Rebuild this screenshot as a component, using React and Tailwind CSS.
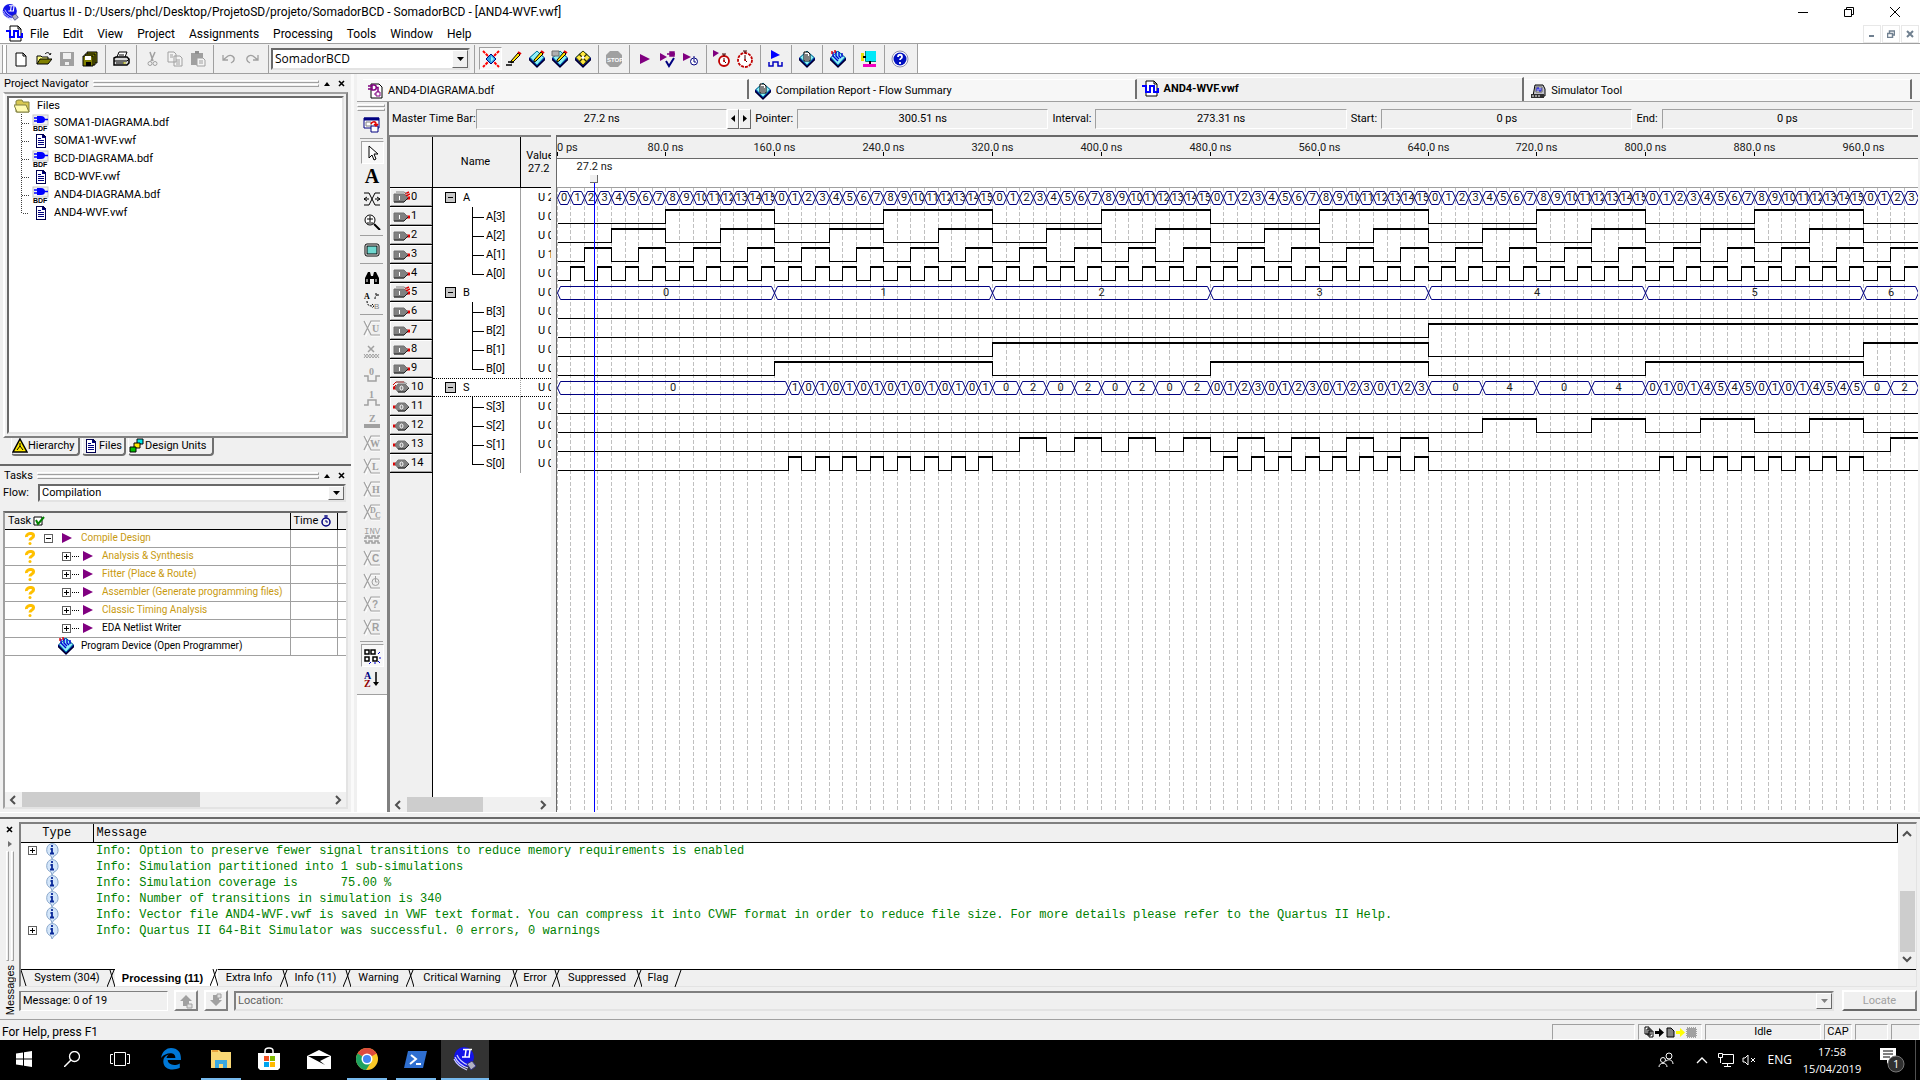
import React, { useLayoutEffect, useRef, useState } from "react";

const SIM_NS = 1000;

const menus = ["File", "Edit", "View", "Project", "Assignments", "Processing", "Tools", "Window", "Help"];

const files = [
  ["SOMA1-DIAGRAMA.bdf", "bdf"],
  ["SOMA1-WVF.vwf", "doc"],
  ["BCD-DIAGRAMA.bdf", "bdf"],
  ["BCD-WVF.vwf", "doc"],
  ["AND4-DIAGRAMA.bdf", "bdf"],
  ["AND4-WVF.vwf", "doc"],
];

const tasks = [
  { label: "Compile Design", level: 0, pending: true },
  { label: "Analysis & Synthesis", level: 1, pending: true },
  { label: "Fitter (Place & Route)", level: 1, pending: true },
  { label: "Assembler (Generate programming files)", level: 1, pending: true },
  { label: "Classic Timing Analysis", level: 1, pending: true },
  { label: "EDA Netlist Writer", level: 1, pending: false },
  { label: "Program Device (Open Programmer)", level: 0, device: true },
];

const busA = (k) => k % 16;
const busB = (k) => Math.floor(k / 16);
const busS = (k) => busA(k) & busB(k);

const signals = [
  { name: "A", fn: busA, value: "U 2" },
  { name: "A[3]", fn: busA, bit: 3, value: "U 0" },
  { name: "A[2]", fn: busA, bit: 2, value: "U 0" },
  { name: "A[1]", fn: busA, bit: 1, value: "U 1" },
  { name: "A[0]", fn: busA, bit: 0, value: "U 0" },
  { name: "B", fn: busB, value: "U 0" },
  { name: "B[3]", fn: busB, bit: 3, value: "U 0" },
  { name: "B[2]", fn: busB, bit: 2, value: "U 0" },
  { name: "B[1]", fn: busB, bit: 1, value: "U 0" },
  { name: "B[0]", fn: busB, bit: 0, value: "U 0" },
  { name: "S", fn: busS, value: "U 0", output: true },
  { name: "S[3]", fn: busS, bit: 3, value: "U 0", output: true },
  { name: "S[2]", fn: busS, bit: 2, value: "U 0", output: true },
  { name: "S[1]", fn: busS, bit: 1, value: "U 0", output: true },
  { name: "S[0]", fn: busS, bit: 0, value: "U 0", output: true },
];

const messages = [
  ["Info: Option to preserve fewer signal transitions to reduce memory requirements is enabled", true],
  ["Info: Simulation partitioned into 1 sub-simulations", false],
  ["Info: Simulation coverage is      75.00 %", false],
  ["Info: Number of transitions in simulation is 340", false],
  ["Info: Vector file AND4-WVF.vwf is saved in VWF text format. You can compress it into CVWF format in order to reduce file size. For more details please refer to the Quartus II Help.", false],
  ["Info: Quartus II 64-Bit Simulator was successful. 0 errors, 0 warnings", true],
];

const messageTabs = [
  ["System (304)", "w-[88px]"],
  ["Processing (11)", "w-[103px]"],
  ["Extra Info", "w-[70px]"],
  ["Info (11)", "w-[63px]"],
  ["Warning", "w-[63px]"],
  ["Critical Warning", "w-[104px]"],
  ["Error", "w-[42px]"],
  ["Suppressed", "w-[82px]"],
  ["Flag", "w-[40px]"],
];

/* ---------- small drawings ---------- */

function Svg({ w = 16, h = 16, vw, vh, crisp = false, children }) {
  return (
    <svg
      width={w}
      height={h}
      viewBox={`0 0 ${vw || w} ${vh || h}`}
      shapeRendering={crisp ? "crispEdges" : "auto"}
      className="block shrink-0"
      fill="none"
      aria-hidden="true"
    >
      {children}
    </svg>
  );
}

const Chip = ({ children }) => (
  <Svg w={18} h={18}>
    <path d="M9 1 17 8v2l-8 8-8-8V8Z" fill="#000080" />
    <path d="M9 1 16 7.500 9 15 2 7.500Z" fill="#8ff0f8" stroke="#0080a0" />
    <path d="M1 9.500 9 17l8-7.500" stroke="#000" />
    {children}
  </Svg>
);
const Pencil = ({ x = 0, y = 0 }) => (
  <g transform={`translate(${x} ${y})`}>
    <path d="M1 10 8 2 10 4 3 11 1 12Z" fill="#ffe000" stroke="#000" />
    <path d="M8 1 11 3" stroke="#e00000" strokeWidth="2" />
  </g>
);
const Quartus = ({ s = 16 }) => (
  <Svg w={s} h={s} vw={24} vh={24}>
    <circle cx="11" cy="10" r="10" fill="#1414e8" />
    <path d="M2 10c2 5 7 9 13 11M1 12c3 6 8 9 13 11M4 8c2 5 6 8 11 10" stroke="#d0d0ff" strokeWidth="1.200" />
    <path d="m14 17 5-3 4 5-5 4z" fill="#b0b0c0" stroke="#303080" />
    <path d="M10 2.500h9M9 10h8M13 3l-1 7M17 3l-1 7" stroke="#fff" strokeWidth="1.500" />
  </Svg>
);
const Play = ({ c = "#800080" }) => (
  <Svg><path d="M3 3 13 8 3 13Z" fill={c} /></Svg>
);
const Clock = ({ x, y, r, c = "#c00000" }) => (
  <g>
    <circle cx={x} cy={y} r={r} fill="#fff" stroke={c} strokeWidth="1.8" strokeDasharray={r > 5 ? "3 1" : ""} />
    <path d={`M${x} ${y - r - 2}v2M${x - 2} ${y - r - 2}h4M${x} ${y - r + 2}V${y}L${x + 2} ${y + 2}`} stroke="#400000" />
    <circle cx={x} cy={y} r="1" fill={c} />
  </g>
);
const WaveDoc = () => (
  <Svg w={17} h={17}>
    <path d="M4 1h8l3 3v12H4z" fill="#fff" stroke="#000" />
    <path d="M12 1v3h3" stroke="#000" />
    <path d="M0 6h4v6h4V6h4v6h4V8" stroke="#0000ff" strokeWidth="2" />
  </Svg>
);
const Doc = () => (
  <Svg crisp>
    <path d="M3.500 1.500h6l3 3v10h-9z" fill="#fff" stroke="#000050" strokeWidth="1.5" />
    <path d="M9.500 1.500v3h3M5 7.500h6M5 9.500h6M5 11.500h6M5 5.500h3" stroke="#000080" />
  </Svg>
);
const Bdf = () => (
  <Svg w={17} h={18}>
    <rect x="1" y="1" width="15" height="10" fill="#f0f0f0" stroke="#c8c8c8" />
    <path d="M5 2h4a4 3.500 0 0 1 0 7H5z" fill="#0000ff" />
    <path d="M2 4h4M2 7h4M12 5.500h4" stroke="#0000ff" strokeWidth="1.500" />
    <text x="1" y="17" fontSize="7" fontWeight="bold" fontFamily="Liberation Sans" fill="#000">BDF</text>
  </Svg>
);
const Folder = () => (
  <Svg w={17} h={14}>
    <path d="M2 4V2l2-1h4l1 2h6v10H2z" fill="#d8c850" stroke="#808040" />
    <path d="M0 6h12l3 7H3z" fill="#fffbb0" stroke="#808040" />
  </Svg>
);
const Report = () => (
  <Chip>
    <path d="M6 2h4l2 2v7H6z" fill="#fff" stroke="#000" />
    <path d="M7 5h3M7 7h4M7 9h4" stroke="#000" />
  </Chip>
);
const Program = () => (
  <Chip>
    <path d="M4 2v4l5 5M7 1v5l3 3M10 2v4l2 2M13 3v4" stroke="#0000d0" strokeWidth="1.400" />
    <path d="M3 1v3M6 0v3" stroke="#e00000" strokeWidth="1.400" />
  </Chip>
);
const PinIcon = ({ group, output }) => (
  <Svg w={17} h={13}>
    {group && (output
      ? <path d="M0 4l3-3h8M0 7l3-3" stroke="#d00000" />
      : <path d="M12 3l4-2M13 5l4-2M14 8l3-2" stroke="#e00000" strokeWidth="1.500" />)}
    {group && <path d="M3 1h8l3 2" stroke="#808080" />}
    {output ? (
      <>
        <path d="M0 7h3" stroke="#e00000" strokeWidth="3" />
        <path d="M5 3h7l4 4-4 4H5L2 7z" fill="#808080" stroke="#707070" />
        <path d="M5 11h7l4-4" stroke="#202020" />
        <ellipse cx="8.500" cy="7" rx="1.500" ry="2" stroke="#fff" />
      </>
    ) : (
      <>
        <path d="M14 7h3" stroke="#e00000" strokeWidth="3" />
        <path d="M1 3h10l4 4-4 4H1z" fill="#808080" stroke="#707070" />
        <path d="M1 11h10l4-4" stroke="#202020" />
        <path d="M6.500 5v4" stroke="#fff" />
      </>
    )}
  </Svg>
);
const InfoIcon = () => (
  <Svg w={16} h={16}>
    <path d="M8 .5a6.500 6.500 0 0 1 2 12.500L8 16l-1-3A6.500 6.500 0 0 1 8 .5z" fill="#d4e6fa" stroke="#8aa8cc" />
    <path d="M8 2v2M6.500 6H8v4.500M6 10.500h4" stroke="#0a2a9a" strokeWidth="1.800" />
  </Svg>
);
const Expander = ({ plus }) => (
  <Svg w={9} h={9} crisp>
    <rect x="0.500" y="0.500" width="8" height="8" fill="#fff" stroke="#606060" />
    <path d={plus ? "M2 4.500h5M4.500 2v5" : "M2 4.500h5"} stroke="#000" />
  </Svg>
);
const Arrow = ({ dir, c = "#505050" }) => {
  const d = { left: "M7 1 3 5 7 9", right: "M3 1 7 5 3 9", up: "M1 7 5 3 9 7", down: "M1 3 5 7 9 3" }[dir];
  return <Svg w={10} h={10}><path d={d} stroke={c} strokeWidth="2" /></Svg>;
};
const DownTri = ({ c = "#000" }) => <Svg w={7} h={4}><path d="M0 0h7L3.500 4z" fill={c} /></Svg>;

const mainIcons = {
  New: <Svg><path d="M3 2h7l3 3v10H3z" fill="#fff" stroke="#000" /><path d="M10 2v3h3" stroke="#000" /></Svg>,
  Open: <Svg><path d="M1 13V5h4l1 1h6v3" fill="#ffff80" stroke="#000" /><path d="M1 13 4 8h12l-4 5z" fill="#808000" stroke="#000" /><path d="M9 3c2-2 4-2 5 1l1-2" stroke="#000" /></Svg>,
  Save: <Svg><path d="M1 1h14v14H1z" fill="#a0a0a0" /><path d="M4 2h8v6H4zM6 11h4v3H6z" fill="#f0f0f0" /></Svg>,
  "Save All": <Svg><path d="M5 1h10v11H5z" fill="#808000" stroke="#000" /><path d="M3 3h10v11H3z" fill="#808000" stroke="#000" /><path d="M1 5h10v10H1z" fill="#808000" stroke="#000" /><path d="M3 5h6v4H3z" fill="#fff" /><path d="M4 11h5v4H4z" fill="#000" /></Svg>,
  Print: <Svg w={18}><path d="M5 6 7 1h8l-2 5" fill="#fff" stroke="#000" /><path d="M2 7l2-1h11l2 2v4l-2 2H2z" fill="#d8d8d8" stroke="#000" strokeWidth="1.500" /><path d="M2 10h13l2-2M4 12h8M7 4h5" stroke="#000" /><path d="M11 12h3" stroke="#c0c000" /></Svg>,
  Cut: <Svg><path d="M6 1 9 10M11 1 7 10" stroke="#a0a0a0" strokeWidth="1.500" /><circle cx="6" cy="12.500" r="2" stroke="#a0a0a0" /><circle cx="11" cy="12.500" r="2" stroke="#a0a0a0" /></Svg>,
  Copy: <Svg><path d="M1 1h6l2 2v8H1zM7 5h6l2 2v8H7z" fill="#f4f4f4" stroke="#a0a0a0" /><path d="M3 4h3M3 6h3M9 9h4M9 11h4M9 13h4" stroke="#a0a0a0" /></Svg>,
  Paste: <Svg><path d="M1 2h12v12H1z" fill="#a0a0a0" /><path d="M5 0h4v3H5z" fill="#909090" /><path d="M7 7h6l2 2v6H7z" fill="#f4f4f4" stroke="#a0a0a0" /><path d="M9 10h4M9 12h4" stroke="#a0a0a0" /></Svg>,
  Undo: <Svg><path d="M2 4v5h5M2 9 7 5c3-2 7 1 6 4-.5 2-2 2-3 3" stroke="#a0a0a0" strokeWidth="1.300" /></Svg>,
  Redo: <Svg><path d="M14 4v5H9M14 9 9 5C6 3 2 6 3 9c.5 2 2 2 3 3" stroke="#a0a0a0" strokeWidth="1.300" /></Svg>,
  Settings: <Svg w={18} h={18}><path d="m1 1 16 16M17 1 1 17" stroke="#ff0000" strokeWidth="2" strokeDasharray="3 1" /><path d="M9 4 14 9 9 14 4 9Z" fill="#30a0e0" stroke="#000080" /><path d="M9 6 12 9 9 12" fill="#8ff0f8" /></Svg>,
  "Assignment Editor": <Svg w={18}><Pencil x={5} y={0} /><path d="M3 11h6M1 14h6" stroke="#000" strokeWidth="1.500" /></Svg>,
  "Pin Planner": <Chip><Pencil x={5} y={0} /></Chip>,
  "Chip Editor": <Chip><path d="M1 1h7v5H1z" fill="#b0b0b0" stroke="#707070" /><Pencil x={5} y={0} /></Chip>,
  Floorplan: <Chip><path d="M9 1 16 7.500 9 15 2 7.500Z" fill="#ffe840" stroke="#404000" /><path d="m5 4 8 8M13 4 5 12" stroke="#303000" strokeWidth="1.300" /><path d="m7 7.500 2-2 2 2-2 2z" fill="#fff" /></Chip>,
  Stop: <Svg w={18}><path d="M5 0h8l4 4v8l-4 4H5l-4-4V4z" fill="#a0a0a0" /><text x="2" y="11" fontSize="6" fontWeight="bold" fontFamily="Liberation Sans" fill="#fff">STOP</text></Svg>,
  "Start Compilation": <Play />,
  "Start Analysis": <Svg w={18} h={18}><path d="M1 3 8 7 1 11Z" fill="#800080" /><path d="M8 4h8M11 2h4v4h-4z" stroke="#800080" strokeWidth="1.500" fill="#800080" /><path d="M7 11l3 5 5-8" stroke="#000080" strokeWidth="2" /></Svg>,
  "Start Timing": <Svg><path d="M0 2 8 6 0 10Z" fill="#800080" /><circle cx="11" cy="10.500" r="3.500" fill="#fff" stroke="#000080" /><path d="M11 5v2M11 8v3h2" stroke="#000080" /></Svg>,
  "Timing Analyzer": <Svg w={18} h={18}><path d="M0 0 6 3 0 7Z" fill="#800080" /><Clock x={11} y={11} r={5} /></Svg>,
  "Timing Wizard": <Svg w={18} h={18}><Clock x={9} y={10} r={7} /></Svg>,
  "Start Simulation": <Svg w={18} h={18}><path d="M4 0 13 5 4 9Z" fill="#0000ff" /><path d="M2 12v4h4v-4h5v4h4v-4" stroke="#0000c0" strokeWidth="1.500" /></Svg>,
  Report: <Report />,
  Programmer: <Program />,
  SOPC: <Svg w={18} h={18}><path d="M6 1h10v10H6z" fill="#00e8f8" /><path d="M5.500 1v10.500H16" stroke="#008080" /><path d="M1 3h3v8H1z" fill="#e8e000" /><path d="M3 7h3M10 11v3" stroke="#000" strokeWidth="2" /><path d="M3 15.500h13" stroke="#f000c0" strokeWidth="3" /></Svg>,
  Help: <Svg w={18} h={18}><circle cx="9" cy="9" r="8" fill="#fff" stroke="#9090b0" /><circle cx="9" cy="9" r="6.500" fill="#0010c0" /><path d="M7 7c0-3 4-3 4 0 0 2-2 1-2 3M9 12v2" stroke="#fff" strokeWidth="1.800" /></Svg>,
};
const toolbarA = [["New", "Open", "Save", "Save All"], ["Print"], ["Cut", "Copy", "Paste"], ["Undo", "Redo"]];
const toolbarB = [
  ["Settings", "Assignment Editor", "Pin Planner", "Chip Editor", "Floorplan"],
  ["Stop"],
  ["Start Compilation", "Start Analysis", "Start Timing"],
  ["Timing Analyzer", "Timing Wizard"],
  ["Start Simulation"],
  ["Report"],
  ["Programmer"],
  ["SOPC"],
  ["Help"],
];

const XFrame = ({ children }) => (
  <Svg w={18} h={17}>
    <path d="M2 2h1l5 14h9M2 16h1L8 2h9" stroke="#fff" />
    <path d="M1 1l7 14h9M1 15L8 1h9" stroke="#a0a0a0" strokeWidth="1.200" />
    {children}
  </Svg>
);
const XBox = ({ t, serif = true }) => (
  <XFrame>
    <text x={t === "W" ? 7 : 9} y="12" fontSize="10" fontWeight="bold" fontFamily={serif ? "Liberation Serif" : "Liberation Sans"} fill="#a0a0a0">{t}</text>
  </XFrame>
);
const sideTools = [
  [["Customize", <Svg w={18}><path d="M1 1h15v10H1z" fill="#fff" stroke="#000080" /><path d="M1 2h15" stroke="#000080" strokeWidth="3" /><path d="M3 5h5v4H3z" stroke="#808080" /><path d="M8 9h7v6H8z" fill="#fff" stroke="#000080" /><path d="M8 7c1-3 5-3 5 0v2M11 7l2 2 2-2" stroke="#e00000" strokeWidth="1.500" /></Svg>]],
  [
    ["Selection", <Svg><path d="M5 1v12l3-3 2 5 2-1-2-5h4z" fill="#fff" stroke="#000" /></Svg>],
    ["Text", <span className="font-['Liberation_Serif',serif] text-xl font-bold leading-5">A</span>],
    ["Waveform Editing", <Svg w={18}><path d="M1 2h5l6 12h5M1 14h5l6-12h5M1 8h5M12 8h5M4 6 1 8l3 2M14 6l3 2-3 2" stroke="#000" /></Svg>],
    ["Zoom", <Svg w={18}><circle cx="7" cy="6" r="5" stroke="#000" fill="#fff" /><path d="M4 5h6M7 2v6M4 9h6" stroke="#000" /><path d="m11 10 6 6" stroke="#000" strokeWidth="2" /></Svg>],
  ],
  [["Full Screen", <Svg><rect x="1" y="2" width="14" height="12" rx="2" stroke="#000" fill="#fff" /><rect x="3" y="4" width="10" height="8" fill="#70d8d0" stroke="#000" /></Svg>]],
  [
    ["Find", <Svg><path d="M1 14V8l3-6h2l1 4h2l1-4h2l3 6v6h-5V9H6v5z" fill="#000" /><path d="M3 9v3M12 9v3" stroke="#fff" /></Svg>],
    ["Replace", <Svg w={18} h={18}><text x="1" y="7" fontSize="8" fontWeight="bold" fontFamily="Liberation Serif" fill="#000">A</text><text x="11" y="17" fontSize="8" fontFamily="Liberation Sans" fill="#808080">B</text><path d="M4 9c0 4 2 5 5 5M9 12l2 2-2 2M12 7c0-3 1-4 3-4M12 2h3v3" stroke="#000" strokeDasharray="2 1" /></Svg>],
  ],
  [
    ["Uninitialized", <XBox t="U" />],
    ["Forcing Unknown", <Svg w={18}><path d="M5 2 11 8M11 2 5 8" stroke="#a0a0a0" strokeWidth="1.500" /><path d="m1 10 3 4 3-4 3 4 3-4 3 4M1 14l3-4 3 4 3-4 3 4 3-4" stroke="#a0a0a0" /></Svg>],
    ["Forcing Low", <Svg w={18}><text x="6" y="8" fontSize="10" fontWeight="bold" fontFamily="Liberation Serif" fill="#a0a0a0">0</text><path d="M1 9h4v5h8V9h4" stroke="#a0a0a0" strokeWidth="1.500" /></Svg>],
    ["Forcing High", <Svg w={18}><text x="6" y="8" fontSize="10" fontWeight="bold" fontFamily="Liberation Serif" fill="#a0a0a0">1</text><path d="M1 15h4v-5h8v5h4" stroke="#a0a0a0" strokeWidth="1.500" /></Svg>],
    ["High Impedance", <Svg w={18}><text x="6" y="9" fontSize="10" fontWeight="bold" fontFamily="Liberation Serif" fill="#a0a0a0">Z</text><path d="M1 13h16" stroke="#a0a0a0" strokeWidth="4" /></Svg>],
    ["Weak Unknown", <XBox t="W" />],
    ["Weak Low", <XBox t="L" />],
    ["Weak High", <XBox t="H" />],
    ["Don't Care", <XFrame><text x="7" y="9" fontSize="8" fontFamily="Liberation Serif" fontWeight="bold" fill="#a0a0a0">D</text><text x="12" y="14" fontSize="8" fontFamily="Liberation Serif" fontWeight="bold" fill="#a0a0a0">C</text></XFrame>],
    ["Invert", <Svg w={18} h={17}><text x="1" y="7" fontSize="9" fontFamily="Liberation Mono" fill="#a0a0a0">INV</text><path d="M1 11h2V9h3v2h3V9h3v2h3V9h2M1 14h2v2h3v-2h3v2h3v-2h3v2h2" stroke="#a0a0a0" strokeWidth="1.500" /></Svg>],
    ["Count Value", <XBox t="C" serif={false} />],
    ["Overwrite Clock", <XFrame><circle cx="12.500" cy="9" r="3.500" stroke="#a0a0a0" /><path d="M12.500 3v6h2" stroke="#a0a0a0" /></XFrame>],
    ["Arbitrary Value", <XBox t="?" serif={false} />],
    ["Random Values", <XBox t="R" serif={false} />],
  ],
  [
    ["Snap to Grid", <Svg w={18}><path d="M2 2h4v4H2zM8 2h4v4H8zM2 9h4v4H2zM10 9h4v4h-4z" stroke="#000" strokeWidth="1.500" /><path d="m15 6 2-2M16 10h2M15 13l2 2M12 14v2M8 14l-2 2" stroke="#0000d0" /></Svg>],
    ["Sort", <Svg><text x="0" y="8" fontSize="10" fontWeight="bold" fontFamily="Liberation Serif" fill="#000080">A</text><text x="0" y="16" fontSize="10" fontWeight="bold" fontFamily="Liberation Serif" fill="#900000">Z</text><path d="M12 1v12" stroke="#000" strokeWidth="1.500" /><path d="M9 11h6l-3 4z" fill="#000" /></Svg>],
  ],
];
const pressed = "border border-t-[#a0a0a0] border-l-[#a0a0a0] border-r-white border-b-white bg-[#f8f8f8]";

/* ---------- chrome pieces ---------- */

const GripLines = () => (
  <div className="flex flex-1 flex-col gap-px" aria-hidden="true">
    <div className="h-[3px] border border-white border-r-[#a0a0a0] border-b-[#a0a0a0]" />
    <div className="h-[3px] border border-white border-r-[#a0a0a0] border-b-[#a0a0a0]" />
  </div>
);

const PanelTitle = ({ title }) => (
  <div className="flex h-[17px] items-center gap-1 pl-1 pr-1">
    <h2>{title}</h2>
    <GripLines />
    <button aria-label={`Collapse ${title}`} className="flex w-2 justify-center">
      <Svg w={6} h={4}><path d="M0 4h6L3 0z" fill="#000" /></Svg>
    </button>
    <button aria-label={`Close ${title}`} className="flex w-3 justify-center">
      <Svg w={7} h={7}><path d="m1 1 5 5M6 1 1 6" stroke="#000" strokeWidth="1.600" /></Svg>
    </button>
  </div>
);

const Sep = () => <div className="ml-1 mr-[3px] h-7 w-px bg-[#a0a0a0]" />;

const ToolGroups = ({ groups }) =>
  groups.map((g, i) => (
    <React.Fragment key={i}>
      {i > 0 && <Sep />}
      <div className="flex">
        {g.map((n) => (
          <button key={n} aria-label={n} className={`flex h-[23px] w-[23px] items-center justify-center ${n === "Settings" ? pressed : ""}`}>
            {mainIcons[n]}
          </button>
        ))}
      </div>
    </React.Fragment>
  ));

const HScroll = ({ thumb }) => (
  <div className="flex h-[15px] shrink-0 items-center justify-between bg-[#f0f0f0] px-[3px]">
    <Arrow dir="left" />
    <div className="mx-1 h-full flex-1"><div className={`h-full bg-[#cdcdcd] ${thumb}`} /></div>
    <Arrow dir="right" />
  </div>
);

function TitleBar() {
  return (
    <header className="bg-white font-[Roboto,sans-serif] text-xs">
      <div className="flex h-6 items-center pl-0.5">
        <Quartus s={17} />
        <h1 className="ml-1 flex-1">Quartus II - D:/Users/phcl/Desktop/ProjetoSD/projeto/SomadorBCD - SomadorBCD - [AND4-WVF.vwf]</h1>
        <div className="flex pr-0.5">
          <button aria-label="Minimize" className="flex w-[46px] justify-center"><Svg w={10} h={10}><path d="M0 5.500h10" stroke="#000" /></Svg></button>
          <button aria-label="Restore" className="flex w-[46px] justify-center"><Svg w={10} h={10}><path d="M.5 2.500h7v7h-7zM2.500 2.500v-2h7v7h-2" stroke="#000" /></Svg></button>
          <button aria-label="Close" className="flex w-[46px] justify-center"><Svg w={10} h={10}><path d="m0 0 10 10M10 0 0 10" stroke="#000" /></Svg></button>
        </div>
      </div>
      <nav className="flex h-[19px] items-center pl-[6px]">
        <WaveDoc />
        <div className="flex flex-1">
          {menus.map((m) => (
            <button key={m} className="px-[7px]">{m}</button>
          ))}
        </div>
        <button aria-label="Minimize document" className="flex h-[18px] w-[18px] items-center justify-center border border-[#e8e8e8]"><Svg w={8} h={8}><path d="M1 6h5" stroke="#708090" strokeWidth="2" /></Svg></button>
        <button aria-label="Restore document" className="ml-px flex h-[18px] w-[18px] items-center justify-center border border-[#e8e8e8]"><Svg w={8} h={8}><path d="M.5 3.500h5v4h-5zM2.500 3V1h5v4H6" stroke="#708090" strokeWidth="1.500" /></Svg></button>
        <button aria-label="Close document" className="ml-px mr-px flex h-[18px] w-[18px] items-center justify-center border border-[#e8e8e8]"><Svg w={8} h={8}><path d="m1 1 6 6M7 1 1 7" stroke="#708090" strokeWidth="2" /></Svg></button>
      </nav>
    </header>
  );
}

function Toolbar() {
  return (
    <div className="flex h-[31px] border-t border-b border-[#a0a0a0] bg-white">
      <div className="flex items-center border-r border-[#a0a0a0] bg-[#f0f0f0] pl-0.5 pr-[6px]">
        <div className="mr-[2px] h-7 w-[5px] border-x border-[#a0a0a0] bg-white" />
        <ToolGroups groups={toolbarA} />
        <div className="ml-[5px] mr-[2px] h-7 w-px bg-[#a0a0a0]" />
        <div className="flex h-[22px] w-[199px] border-2 border-[#696969] border-r-[#e3e3e3] border-b-[#e3e3e3] bg-white">
          <select aria-label="Entity" className="min-w-0 flex-1 appearance-none bg-transparent pl-0.5 font-['Open_Sans',sans-serif] text-xs leading-4">
            <option>SomadorBCD</option>
          </select>
          <span className="flex w-4 items-center justify-center border border-white border-r-[#696969] border-b-[#696969] bg-[#f0f0f0]"><DownTri /></span>
        </div>
        <div className="mx-1 h-7 w-px bg-[#a0a0a0]" />
        <ToolGroups groups={toolbarB} />
      </div>
    </div>
  );
}

function ProjectNavigator() {
  return (
    <section className="flex h-[390px] flex-col pt-px">
      <PanelTitle title="Project Navigator" />
      <div className="mx-[3px] flex-1 border-2 border-white border-t-[#a0a0a0] border-r-[#808080] border-b-[#808080] p-0.5">
        <div className="h-full border-2 border-[#a0a0a0] border-t-[#696969] border-l-[#696969] border-r-[#e3e3e3] border-b-[#e3e3e3] bg-white pl-[5px]">
          <div className="flex h-[15px] items-center gap-[6px]"><Folder />Files</div>
          <ul className="pt-px">
            {files.map(([n, k], i) => (
              <li key={n} className="flex h-[18px] items-center">
                <span className="w-[7px] self-stretch" />
                <Svg w={9} h={18} crisp>
                  <path d={i === files.length - 1 ? "M.5 0v9H8" : "M.5 0v18M.5 9.500H8"} stroke="#404040" strokeDasharray="1 1" />
                </Svg>
                <span className="mr-[5px] ml-0.5 flex w-[17px] justify-center">{k === "bdf" ? <Bdf /> : <Doc />}</span>
                {n}
              </li>
            ))}
          </ul>
        </div>
      </div>
      <div className="flex h-[18px] gap-0.5 pl-[11px]">
        {[
          ["Hierarchy", <Svg><path d="M8 1 15 14H1z" fill="#ffe800" stroke="#000" strokeWidth="1.500" /><path d="M8 5v3M8 8l-3 4M8 8l3 4" stroke="#000" /></Svg>, "w-[69px]"],
          ["Files", <Doc />, "w-11"],
          ["Design Units", <Svg><path d="M8 1h6v5H8z" fill="#00e8e8" stroke="#000" /><path d="M5 5h6v5H5z" fill="#ffe800" stroke="#000" /><path d="M1 9h6v5H1z" fill="#00c000" stroke="#000" /></Svg>, "w-[86px]"],
        ].map(([t, ic, w]) => (
          <button key={t} className={`flex items-center whitespace-nowrap rounded-b border-r-2 border-b-2 border-l border-l-white border-[#707070] bg-[#f0f0f0] ${w}`}>
            {ic}{t}
          </button>
        ))}
      </div>
      <div className="h-2" />
    </section>
  );
}

function Tasks() {
  return (
    <section className="flex min-h-0 flex-1 flex-col border-t-2 border-[#696969] pt-px">
      <PanelTitle title="Tasks" />
      <div className="flex h-[18px] items-center pl-[3px] pr-[5px]">
        <label htmlFor="flow" className="w-[35px]">Flow:</label>
        <div className="flex h-[18px] flex-1 border-2 border-[#e3e3e3] border-t-[#696969] border-l-[#696969] bg-white">
          <select id="flow" className="min-w-0 flex-1 appearance-none bg-transparent pl-0.5 leading-[14px]">
            <option>Compilation</option>
          </select>
          <span className="flex w-4 items-center justify-center border border-white border-r-[#696969] border-b-[#696969] bg-[#f0f0f0]"><DownTri /></span>
        </div>
      </div>
      <div className="mx-[3px] mt-[9px] mb-[3px] flex min-h-0 flex-1 flex-col border-2 border-[#e3e3e3] border-t-[#696969] border-l-[#a0a0a0] bg-white">
        <div className="flex-1">
          <table className="w-full table-fixed border-collapse">
            <thead>
              <tr className="h-4 border-b border-black bg-[#f0f0f0] text-left">
                <th className="border-r border-black p-0 pl-[3px] font-normal">
                  <span className="flex items-center gap-0.5">Task <Svg w={12} h={12}><path d="M1 2h8v8H1z" stroke="#000" fill="#fff" /><path d="m3 5 2 4 6-7" stroke="#008000" strokeWidth="2" /></Svg></span>
                </th>
                <th className="w-[47px] border-r border-black p-0 pl-[3px] font-normal">
                  <span className="flex items-center gap-[3px]">Time <Svg w={10} h={12}><circle cx="5" cy="7" r="4" stroke="#000080" strokeWidth="1.500" /><path d="M5 0v3M3 1h4M5 5v2h2" stroke="#000080" /></Svg></span>
                </th>
                <th className="w-[9px] p-0" aria-label="More" />
              </tr>
            </thead>
            <tbody className="text-[10px]">
              {tasks.map((t) => (
                <tr key={t.label} className="h-[18px] border-b border-[#a0a0a0]">
                  <td className="border-r border-[#a0a0a0] p-0">
                    <div className={`flex items-center whitespace-nowrap ${t.pending ? "text-[#c89a10]" : "text-black"}`}>
                      <span className="flex w-[39px] shrink-0 justify-end pr-[9px]">
                        {t.pending && <Svg w={10} h={13}><path d="M1.500 5C1 1 9 0 8.500 4c0 2-3.500 2-3.500 4.500" stroke="#ffc000" strokeWidth="3" /><circle cx="5" cy="11.500" r="1.500" fill="#ffc000" /></Svg>}
                      </span>
                      {t.device ? (
                        <span className="-my-px ml-[13px] mr-[6px]"><Program /></span>
                      ) : (
                        <>
                          {t.level === 1 && <span className="w-[18px] shrink-0" />}
                          <Expander plus={t.level === 1} />
                          <span className={t.level === 1 ? "mx-px w-[7px] shrink-0 border-t border-dotted border-black" : "w-[6px] shrink-0"} />
                          <span className="mr-[6px]"><Play /></span>
                        </>
                      )}
                      {t.label}
                    </div>
                  </td>
                  <td className="border-r border-[#a0a0a0] p-0" />
                  <td className="p-0" />
                </tr>
              ))}
            </tbody>
          </table>
        </div>
        <HScroll thumb="w-[58%]" />
      </div>
    </section>
  );
}

function DocTabs() {
  const tabs = [
    ["AND4-DIAGRAMA.bdf", <Svg><path d="M4 1h8l3 3v11H4z" fill="#fff" stroke="#000" /><path d="M1 3h4M1 6h4M5 2h2c3 0 3 5 0 5H5zM9 4.500h2V9" stroke="#800080" strokeWidth="1.500" /><path d="M9 9h4v4H9zM7 11h2" stroke="#800080" /></Svg>],
    ["Compilation Report - Flow Summary", <Report />],
    ["AND4-WVF.vwf", <WaveDoc />],
    ["Simulator Tool", <Svg w={17}><path d="M5 2h8l2 4v7H3z" fill="#c0c0c8" stroke="#000" /><path d="M6 4h6v5H6z" fill="#fff" stroke="#606060" /><path d="M7 8V5h2v3h2V5" stroke="#0000d0" /><path d="M1 11h13v4H1z" fill="#303030" /><path d="M3 12v2M6 12v2M9 12v2" stroke="#fff" /></Svg>],
  ];
  return (
    <div className="flex h-7 items-end border-b border-[#a0a0a0] bg-[#f7f7f7] pl-[6px] pr-[8px]" role="tablist">
      {tabs.map(([t, ic], i) => {
        const on = i === 2;
        return (
          <button
            key={t}
            role="tab"
            aria-selected={on}
            className={`flex flex-1 items-center gap-1 border-t border-r-2 border-t-white border-r-[#707070] text-left ${i ? "pl-[5px]" : "pl-[3px]"} ${on ? "h-6 bg-[#f0f0f0] pb-0.5 font-bold" : "mb-0.5 h-5 pt-0.5"}`}
          >
            <span className="flex w-[18px] justify-center">{ic}</span>{t}
          </button>
        );
      })}
    </div>
  );
}

function SideToolbar() {
  return (
    <div className="flex w-8 flex-col border-r-2 border-[#808080] bg-white">
      <div className="border-b border-[#a0a0a0] bg-[#f0f0f0] pb-1">
        <div className="flex h-[9px] pt-0.5 pr-0.5"><GripLines /></div>
        {sideTools.map((g, i) => (
          <React.Fragment key={i}>
            {i > 0 && <div className="my-[2px] ml-[3px] mr-1 h-px bg-[#a0a0a0]" />}
            <div className={i === 0 ? "flex flex-col items-center pt-0.5" : "flex flex-col items-center"}>
              {g.map(([n, ic]) => (
                <button key={n} aria-label={n} className={`flex h-[23px] w-[23px] items-center justify-center ${n === "Selection" || n === "Snap to Grid" ? pressed : ""}`}>{ic}</button>
              ))}
            </div>
          </React.Fragment>
        ))}
      </div>
    </div>
  );
}

const ReadBox = ({ id, children }) => (
  <output id={id} className="flex h-5 min-w-0 flex-1 items-center justify-center border border-white border-t-[#a0a0a0] border-l-[#a0a0a0]">{children}</output>
);

function TimeBar() {
  return (
    <div className="flex h-[33px] items-center gap-1 whitespace-nowrap pl-[3px] pr-[7px]">
      <label htmlFor="tb-master" className="w-20">Master Time Bar:</label>
      <ReadBox id="tb-master">27.2 ns</ReadBox>
      <div className="-ml-1 flex">
        {["M5 0v7L1 3.500z", "M1 0v7l4-3.500z"].map((d, i) => (
          <button key={d} aria-label={i ? "Next transition" : "Previous transition"} className="flex h-5 w-3 items-center justify-center border border-white border-r-[#696969] border-b-[#696969]">
            <Svg w={6} h={7}><path d={d} fill="#000" /></Svg>
          </button>
        ))}
      </div>
      {[["Pointer:", "300.51 ns"], ["Interval:", "273.31 ns"], ["Start:", "0 ps"], ["End:", "0 ps"]].map(([l, v]) => (
        <React.Fragment key={l}>
          <label htmlFor={`tb-${l}`}>{l}</label>
          <ReadBox id={`tb-${l}`}>{v}</ReadBox>
        </React.Fragment>
      ))}
    </div>
  );
}

function SignalList() {
  return (
    <div className="flex w-[162px] shrink-0 flex-col overflow-hidden border-t-2 border-l border-[#808080] bg-white">
      <div className="flex min-h-0 flex-1 flex-col overflow-hidden">
        <table className="w-[181px] table-fixed border-separate border-spacing-0">
          <thead>
            <tr className="h-[51px] bg-[#f0f0f0]">
              <th className="w-[43px] border-r border-b border-black p-0" aria-label="Node" />
              <th className="w-[88px] border-r border-b border-black p-0 pr-0.5 font-normal">Name</th>
              <th className="w-[50px] border-b border-black p-0 font-normal leading-[13px]">Value at<br />27.2 ns</th>
            </tr>
          </thead>
          <tbody>
            {signals.map((s, i) => {
              const group = s.bit === undefined;
              const focus = s.name === "S" ? "border-y border-dotted border-y-black" : "";
              return (
                <tr key={s.name} className="h-[19px]">
                  <td className="border-r border-b border-black p-0">
                    <button className="flex h-[18px] w-full items-center gap-px border border-white border-r-[#a0a0a0] border-b-[#a0a0a0] bg-[#f0f0f0] pl-0.5">
                      <PinIcon group={group} output={s.output} />
                      {i}
                    </button>
                  </td>
                  <td className={`border-r border-r-[#a0a0a0] p-0 ${focus}`}>
                    {group ? (
                      <div className="flex items-center pl-3">
                        <button aria-label={`Collapse ${s.name}`} className="mr-[7px] flex h-[11px] w-[11px] items-center justify-center border border-black bg-[#c8c8c8]"><span className="h-px w-[5px] bg-black" /></button>
                        {s.name}
                      </div>
                    ) : (
                      <div className="flex h-[19px] items-center pl-[39px]">
                        <Svg w={14} h={19} crisp><path d={s.bit === 0 ? "M.5 0v10M0 10.500h12" : "M.5 0v19M0 10.500h12"} stroke="#000" /></Svg>
                        {s.name}
                      </div>
                    )}
                  </td>
                  <td className={`p-0 text-center ${focus}`}>{s.value}</td>
                </tr>
              );
            })}
          </tbody>
        </table>
        <div className="w-[43px] flex-1 border-r border-black bg-[#f0f0f0]" />
      </div>
      <HScroll thumb="w-[60%]" />
    </div>
  );
}

function segments(fn) {
  const out = [];
  for (let k = 0; k < 100; k++) {
    const v = fn(k);
    const last = out[out.length - 1];
    if (last && last.v === v) last.to = k + 1;
    else out.push({ v, from: k, to: k + 1 });
  }
  return out;
}

function Waveforms() {
  const ref = useRef(null);
  const [width, setWidth] = useState(1361);
  useLayoutEffect(() => {
    const el = ref.current;
    const update = () => setWidth(el.clientWidth);
    update();
    const ro = new ResizeObserver(update);
    ro.observe(el);
    return () => ro.disconnect();
  }, []);
  const px = (ns) => Math.floor((ns * width) / SIM_NS);
  const at = (k) => px(k * 10) + 0.5;
  const font = { fontFamily: "Roboto, Arial, sans-serif", fontSize: 11 };
  const cursor = px(27.2) + 0.5;

  return (
    <div className="min-w-0 flex-1 overflow-hidden border-t-2 border-l border-[#696969] bg-white">
      <div ref={ref} className="h-full">
        <svg width="100%" height="100%" className="block" shapeRendering="crispEdges" role="img" aria-label="Waveforms">
          <rect width="100%" height="21" fill="#f0f0f0" />
          <path d={`M0 21.500H${width}`} stroke="#696969" />
          <path d={`M0 50.500H${width}`} stroke="#a0a0a0" />
          {Array.from({ length: 100 }, (_, k) => (
            <line key={k} x1={at(k)} x2={at(k)} y1="51" y2="100%" stroke="#c0c0c0" strokeDasharray="4 2" />
          ))}
          {Array.from({ length: 13 }, (_, k) => (
            <g key={k}>
              <path d={`M${at(k * 8)} 15v4`} stroke="#000" />
              <text x={k ? at(k * 8) : 0} y="14" textAnchor={k ? "middle" : "start"} fill="#202020" style={font}>{k ? `${k * 80}.0 ns` : "0 ps"}</text>
            </g>
          ))}
          {signals.map((s, i) => {
            const top = 51 + 19 * i;
            const segs = segments(s.bit === undefined ? s.fn : (k) => (s.fn(k) >> s.bit) & 1);
            if (s.bit !== undefined) {
              const hi = top + 3;
              const lo = top + 16.5;
              const d = segs.map((g, n) => `${n ? "L" : "M"}${at(g.from)} ${g.v ? hi : lo}H${at(g.to)}`).join("");
              return (
                <g key={s.name} stroke="#000" fill="none">
                  <path d={d} />
                  {segs.filter((g) => g.v).map((g) => <path key={g.from} d={`M${at(g.from) - 0.5} ${hi}H${at(g.to) + 0.5}`} strokeWidth="2" />)}
                </g>
              );
            }
            const t = top + 3.5;
            const b = top + 16.5;
            const m = top + 10;
            return (
              <g key={s.name}>
                {segs.map((g) => {
                  const x1 = at(g.from);
                  const x2 = at(g.to);
                  const two = g.v > 9;
                  const w = x2 - x1 - 3;
                  return (
                    <g key={g.from}>
                      <path d={`M${x1} ${m}L${x1 + 3} ${t}H${x2 - 3}L${x2} ${m}L${x2 - 3} ${b}H${x1 + 3}Z`} fill="none" stroke="#000080" shapeRendering="auto" />
                      <svg x={x1 + 2} y={top} width={w} height="19" overflow="hidden">
                        <text x={two ? 0 : (w - 1) / 2} y="13" textAnchor={two ? "start" : "middle"} fill="#202020" style={font}>{g.v}</text>
                      </svg>
                    </g>
                  );
                })}
              </g>
            );
          })}
          <text x={cursor} y="33" textAnchor="middle" fill="#202020" style={font}>27.2 ns</text>
          <rect x={cursor - 4.5} y="38" width="8" height="8" fill="#696969" />
          <rect x={cursor - 4.5} y="38" width="7" height="7" fill="#f0f0f0" />
          <line x1={cursor} x2={cursor} y1="46" y2="100%" stroke="#0000ff" />
        </svg>
      </div>
    </div>
  );
}

function Messages() {
  return (
    <section className="flex shrink-0 border-t border-white bg-[#f0f0f0] pt-1">
      <div className="flex w-full border-t-2 border-[#696969] pt-[3px]">
        <div className="flex w-[19px] flex-col items-center pt-1">
          <button aria-label="Close Messages"><Svg w={7} h={7}><path d="m1 1 5 5M6 1 1 6" stroke="#000" strokeWidth="1.600" /></Svg></button>
          <div className="mt-2 mb-1"><Svg w={4} h={6}><path d="M0 0v6l4-3z" fill="#707070" /></Svg></div>
          <div className="flex flex-1 gap-0.5">
            <div className="w-[3px] border border-white border-r-[#a0a0a0] border-b-[#a0a0a0]" />
            <div className="w-[3px] border border-white border-r-[#a0a0a0] border-b-[#a0a0a0]" />
          </div>
          <h2 className="mb-1 mt-1 rotate-180 font-['Liberation_Sans',sans-serif] leading-4 [writing-mode:vertical-rl]">Messages</h2>
        </div>
        <div className="min-w-0 flex-1 pr-[3px]">
          <div className="border-t-2 border-l-2 border-r border-b border-t-[#808080] border-l-[#808080] border-r-[#e3e3e3] border-b-[#e3e3e3] bg-white">
            <div className="flex h-[145px]">
              <div className="min-w-0 flex-1">
                <table className="w-full table-fixed border-collapse font-['Liberation_Mono',monospace] text-xs">
                  <thead>
                    <tr className="h-[18px] border-b border-black bg-[#f0f0f0] text-left leading-4">
                      <th className="w-[72px] border-r border-black p-0 text-center font-normal">Type</th>
                      <th className="border-r border-black p-0 pl-[3px] font-normal">Message</th>
                    </tr>
                  </thead>
                  <tbody>
                    {messages.map(([m, plus]) => (
                      <tr key={m} className="h-4 leading-4">
                        <td className="p-0">
                          <div className="flex items-center pl-[7px]">
                            <span className="w-4">{plus && <Expander plus />}</span>
                            <InfoIcon />
                          </div>
                        </td>
                        <td className="whitespace-pre p-0 pl-[3px] text-[#008000]">{m}</td>
                      </tr>
                    ))}
                  </tbody>
                </table>
              </div>
              <div className="flex w-[18px] flex-col items-center bg-[#f0f0f0] py-[5px]">
                <Arrow dir="up" />
                <div className="flex-1" />
                <div className="h-[61px] w-[15px] bg-[#cdcdcd]" />
                <div className="h-0.5" />
                <Arrow dir="down" />
              </div>
            </div>
            <div className="flex h-[17px] bg-[#f0f0f0]" role="tablist">
              <svg width="6" height="17" className="shrink-0" fill="none"><path d="M0 .5h6M0 1l5 16" stroke="#000" /></svg>
              {messageTabs.map(([t, w], i) => {
                const on = i === 1;
                return (
                  <button key={t} role="tab" aria-selected={on} className={`flex shrink-0 items-stretch ${w} ${on ? "bg-white font-['Liberation_Sans',sans-serif] font-bold" : "border-t border-black"}`}>
                    <span className="flex flex-1 items-center justify-center whitespace-nowrap">{t}</span>
                    <svg width="8" height="17" className="shrink-0" fill="none">
                      <path d={i === messageTabs.length - 1 ? "M7 0 1 17" : "M7 0 0 17M3 0l5 17"} stroke="#000" />
                    </svg>
                  </button>
                );
              })}
              <div className="flex-1 border-t border-black" />
            </div>
          </div>
          <div className="flex items-center pt-[3px] pb-2">
            <output className="flex h-5 w-[149px] items-center border border-white border-t-[#808080] border-l-2 border-l-[#808080] pl-0.5">Message: 0 of 19</output>
            {["M8 2 14 8h-3v5H5V8H2z", "M8 13 2 7h3V2h6v5h3z"].map((d, i) => (
              <button key={d} disabled aria-label={i ? "Next message" : "Previous message"} className="ml-[6px] flex h-[21px] w-6 items-center justify-center border-2 border-white border-r-[#808080] border-b-[#808080]">
                <Svg><path d={d} fill="#a0a0a0" /><path d={i ? "M9 1h4v4H9z" : "M9 11h5v4H9z"} fill="#e0e0e0" stroke="#a0a0a0" /></Svg>
              </button>
            ))}
            <div className="ml-[6px] flex h-5 flex-1 border-2 border-[#e3e3e3] border-t-[#808080] border-l-[#808080]">
              <select disabled aria-label="Location" className="min-w-0 flex-1 appearance-none bg-transparent pl-0.5 leading-4 text-[#606060] opacity-100">
                <option>Location:</option>
              </select>
              <span className="flex w-4 items-center justify-center border border-white border-r-[#696969] border-b-[#696969]"><DownTri c="#808080" /></span>
            </div>
            <button disabled className="ml-2 h-[21px] w-[75px] border-2 border-white border-r-[#808080] border-b-[#696969] text-[#a0a0a0]">Locate</button>
          </div>
        </div>
      </div>
    </section>
  );
}

function StatusBar() {
  const box = "flex h-4 items-center justify-center border border-white border-t-[#a0a0a0] border-l-[#a0a0a0]";
  return (
    <footer className="flex h-[21px] shrink-0 items-center gap-[3px] border-t border-[#a0a0a0] bg-[#f0f0f0] pl-0.5 pt-1">
      <span className="flex-1 text-xs">For Help, press F1</span>
      <div className={`${box} w-[83px]`} />
      <div className={`${box} w-16 gap-px`}>
        <Svg w={10} h={12}><path d="M1 1h4v7H1zM3 3h4v6H3zM5 5h4v6H5z" fill="#fff" stroke="#000" /></Svg>
        <Svg w={9} h={9}><path d="M0 3h4V0l5 4.500L4 9V6H0z" fill="#000" /></Svg>
        <Svg w={10} h={11}><path d="M2 1h4l3 3v6H2z" fill="#808080" stroke="#000" /></Svg>
        <Svg w={9} h={9}><path d="M0 3h4V0l5 4.500L4 9V6H0z" fill="#ffff00" /></Svg>
        <Svg w={11} h={11}><path d="M1 1h9v9H1z" fill="#a0a0a0" stroke="#a0a0a0" strokeDasharray="1 1" strokeWidth="2" /></Svg>
      </div>
      <div className={`${box} w-[116px]`}>Idle</div>
      <div className={`${box} w-7`}>CAP</div>
      <div className={`${box} w-[33px]`} />
      <div className={`${box} w-[29px]`} />
    </footer>
  );
}

const taskIcons = [
  ["Start", <Svg><path d="M0 2.500 7 1.500v6H0zM8 1.300 16 0v7.500H8zM0 8.500h7v6l-7-1zM8 8.500h8V16l-8-1.200z" fill="#fff" /></Svg>, "w-12", ""],
  ["Search", <Svg><circle cx="10.500" cy="5.500" r="5" stroke="#fff" strokeWidth="1.300" /><path d="m7 9-7 7" stroke="#fff" strokeWidth="1.500" /></Svg>, "w-12", ""],
  ["Task View", <Svg w={20} h={14}><path d="M4.500.5h11v13h-11zM3 2.500H.5v9H3M17 2.500h2.500v9H17" stroke="#fff" /></Svg>, "w-12", ""],
  ["Edge", <Svg w={22} h={22} vw={20} vh={20}><path d="M1 9C2 3 6 0 10 0c6 0 9 4 9 9v2H7c0 4 6 6 11 3v4c-6 3-15 2-15-6 0-3 2-5 5-6-1 1-2 2-2 3h8c0-6-9-5-13 0z" fill="#0078d7" /></Svg>, "w-[54px]", ""],
  ["File Explorer", <Svg w={22} h={20}><path d="M1 1h8l2 2h10v16H1z" fill="#f8d775" /><path d="M2 2h6" stroke="#e8a33d" strokeWidth="2" /><path d="M5 19v-8h12v8h-4v-4H9v4z" fill="#3aa9e0" /></Svg>, "w-[45px]", "w-10"],
  ["Store", <Svg w={24} h={24}><path d="M8 7V4c0-4 8-4 8 0v3" stroke="#fff" strokeWidth="1.500" /><path d="M1 6h22v15l-2 2H3l-2-2z" fill="#fff" /><path d="M7 9h5v5H7z" fill="#f25022" /><path d="M13 9h5v5h-5z" fill="#7fba00" /><path d="M7 15h5v5H7z" fill="#00a4ef" /><path d="M13 15h5v5h-5z" fill="#ffb900" /></Svg>, "w-[51px]", ""],
  ["Mail", <Svg w={24} h={20}><path d="M0 7 12 1l12 6v13H0z" fill="#fff" /><path d="M1 7h22l-10 5 5 4z" fill="#000" /></Svg>, "w-[49px]", ""],
  ["Chrome", <Svg w={22} h={22}><circle cx="11" cy="11" r="11" fill="#fbc926" /><path d="M11 11 1.500 5.500a11 11 0 0 1 19 0z" fill="#dd4b3e" /><path d="M11 11 1.500 5.500A11 11 0 0 0 10 22l5.500-8.500z" fill="#1da261" /><path d="M11 6h10a11 11 0 0 0-.5-1L11 5z" fill="#dd4b3e" /><circle cx="11" cy="11" r="5.500" fill="#fff" /><circle cx="11" cy="11" r="4" fill="#4285f4" /></Svg>, "w-[47px]", "w-10"],
  ["PowerShell", <Svg w={23} h={19}><path d="M4 1h19l-4 17H0z" fill="#2f6fd0" /><path d="m7 5 5 4-6 5M12 14h5" stroke="#fff" strokeWidth="2" /></Svg>, "w-[51px]", "w-10"],
  ["Quartus II", <Quartus s={24} />, "w-12", "w-full"],
];

function Taskbar() {
  return (
    <nav className="flex h-10 shrink-0 items-stretch bg-black font-['Open_Sans',sans-serif] text-[11px] text-white">
      {taskIcons.map(([n, ic, w, bar]) => (
        <button key={n} aria-label={n} className={`flex flex-col items-center ${w} ${n === "Quartus II" ? "bg-[#333333]" : ""}`}>
          <span className="flex flex-1 items-center">{ic}</span>
          <span className={`h-0.5 ${bar} ${bar ? "bg-[#76b9ed]" : ""}`} />
        </button>
      ))}
      <div className="flex-1" />
      <div className="flex items-center">
        <button aria-label="People"><Svg w={16} h={16}><circle cx="11" cy="4" r="3" stroke="#fff" /><path d="M8 9c4-3 7 0 7 3" stroke="#fff" /><circle cx="5" cy="8" r="2.500" stroke="#fff" /><path d="M1 15c0-5 8-5 8 0" stroke="#fff" /></Svg></button>
        <button aria-label="Show hidden icons" className="ml-[22px]"><Svg w={12} h={8}><path d="m1 7 5-5 5 5" stroke="#fff" strokeWidth="1.300" /></Svg></button>
        <button aria-label="Network" className="ml-[10px]"><Svg w={16} h={14}><path d="M4 1.500h11.500v9H4M9.500 10v3M6 13.500h7M.5.5h4v4h-4zM2.500 4v6" stroke="#fff" /></Svg></button>
        <button aria-label="Volume" className="ml-2"><Svg w={14} h={12}><path d="M1 4h2l3-3v10L3 8H1zM9 4l4 4M13 4 9 8" stroke="#fff" /></Svg></button>
        <button className="ml-3 text-xs">ENG</button>
        <button className="ml-[10px] flex w-[60px] flex-col items-center leading-[17px]"><span>17:58</span><span>15/04/2019</span></button>
        <button aria-label="Notifications, 1 new" className="ml-[18px] mr-[10px]">
          <Svg w={25} h={26}><path d="M0 1h16v12H10l-3 4v-4H0z" fill="#fff" /><path d="M3 4h10M3 7h10M3 10h7" stroke="#000" /><circle cx="16" cy="17" r="8" fill="#303030" stroke="#777" /><text x="13" y="21" fontSize="11" fontFamily="Open Sans" fill="#fff">1</text></Svg>
        </button>
        <div className="h-full w-[5px] border-l border-[#505050]" />
      </div>
    </nav>
  );
}

export default function App() {
  return (
    <div className="flex h-screen flex-col overflow-hidden bg-[#f0f0f0] font-[Roboto,Arial,sans-serif] text-[11px] leading-[14px] text-black">
      <TitleBar />
      <Toolbar />
      <main className="flex min-h-0 flex-1">
        <div className="flex w-[351px] shrink-0 flex-col">
          <ProjectNavigator />
          <Tasks />
        </div>
        <div className="w-[3px] bg-[#fafafa]" />
        <div className="w-[3px]" />
        <div className="flex min-w-0 flex-1 flex-col">
          <DocTabs />
          <div className="flex min-h-0 flex-1">
            <SideToolbar />
            <div className="flex min-w-0 flex-1 flex-col">
              <TimeBar />
              <div className="flex min-h-0 flex-1 pr-0.5">
                <SignalList />
                <div className="w-[5px] shrink-0" />
                <Waveforms />
              </div>
            </div>
          </div>
        </div>
      </main>
      <Messages />
      <StatusBar />
      <Taskbar />
    </div>
  );
}
